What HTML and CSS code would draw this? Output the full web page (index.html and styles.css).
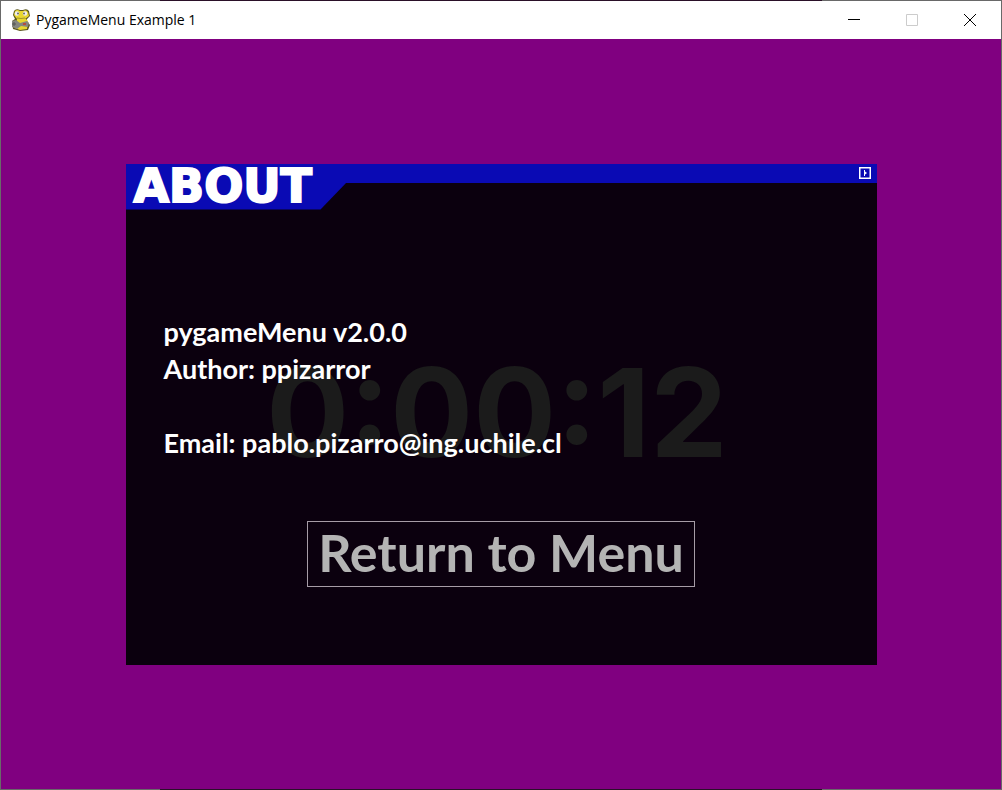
FILE: index.html
```html
<!DOCTYPE html>
<html lang="en">
<head>
<meta charset="utf-8">
<title>PygameMenu Example 1</title>
<link rel="stylesheet" href="styles.css">
</head>
<body>
<div class="window">
  <header class="titlebar">
    <svg class="app-icon" viewBox="0 0 20 22" aria-hidden="true">
      <path d="M3 2Q5-1 9 1H12Q16-1 18 2L19 7 16 10V12L19 16 17 21 9 22 2 20 1 12 4 10 2 6Z" fill="#5b571d"/>
      <path d="M4 2Q6 0 9 2H12Q15 0 17 3L18 7 14 10H6L3 6ZM6 10H15L17 12 16 20 9 21 4 19Z" fill="#e8d72f"/>
      <circle cx="6" cy="4.500" r="2.200" fill="#eee"/><circle cx="14" cy="4.500" r="2.200" fill="#eee"/>
      <circle cx="7" cy="4.500" r="1" fill="#666"/><circle cx="13" cy="4.500" r="1" fill="#666"/>
      <path d="M6 9Q10 10 14 9" stroke="#a1952a" fill="none"/>
      <path d="M1 12 5 11 9 14 16 12 18 14 17 18 10 17 6 20 1 18Z" fill="#85867e"/>
      <path d="M3 13V17M1 15H5" stroke="#555"/><path d="M12 14H15V16H12Z" fill="#b44c40"/>
    </svg>
    <h1 class="window-title">PygameMenu Example 1</h1>
    <div class="window-controls">
      <button class="control" aria-label="Minimize"><svg viewBox="0 0 12 12"><path d="M0 5.500H12"/></svg></button>
      <button class="control" aria-label="Maximize" disabled><svg viewBox="0 0 12 12"><path d="M.5.5H11.500V11.500H.5Z"/></svg></button>
      <button class="control" aria-label="Close"><svg viewBox="0 0 12 12"><path d="M0 0 12 12M12 0 0 12"/></svg></button>
    </div>
  </header>
  <main class="stage">
    <section class="menu">
      <div class="clock">0:00:12</div>
      <header class="menu-bar">
        <h2 class="menu-title">ABOUT</h2>
        <button class="exit" aria-label="Back"><svg viewBox="0 0 12 12"><path d="M.75.75H11.250V11.250H.75Z" stroke-width="1.500"/><path d="M5.500 3V9" stroke-width="1"/><path d="M5.500 4 8 6 5.500 8Z" fill="#fff" stroke="none"/></svg></button>
      </header>
      <div class="menu-body">
        <p class="line">pygameMenu v2.0.0</p>
        <p class="line">Author: ppizarror</p>
        <p class="line">&nbsp;</p>
        <p class="line">Email: pablo.pizarro@ing.uchile.cl</p>
        <button class="return">Return to Menu</button>
      </div>
    </section>
  </main>
</div>
</body>
</html>
```
FILE: styles.css
```css
* { box-sizing: border-box; }
body { margin: 0; }
h1, h2, p { margin: 0; }
button { margin: 0; padding: 0; border: 0; background: none; font: inherit; color: inherit; }

.window {
  display: flex;
  flex-direction: column;
  min-height: 100vh;
  border: 1px solid #696969;
  border-image: linear-gradient(90deg, #696969 16%, #2a1028 16%, #2a1028 82%, #696969 82%) 1;
  background: #800080;
}
.titlebar {
  display: flex;
  align-items: center;
  height: 38px;
  padding: 0 2px 0 10px;
  background: #fff;
  color: #000;
}
.app-icon { width: 20px; height: 22px; }
.window-title {
  margin-left: 5px;
  font: 400 14px/20px "Open Sans", sans-serif;
}
.window-controls { display: flex; height: 100%; margin-left: auto; }
.control { display: grid; place-items: center; width: 58px; }
.control svg { width: 12px; height: 12px; overflow: visible; fill: none; stroke: #000; stroke-width: 1; }
.control:disabled svg { stroke: #ccc; }

.stage { flex: 1; display: grid; place-items: center; }
.menu {
  position: relative;
  width: calc(75% + 1px);
  min-height: 501px;
  background: #0b000e;
  color: #fff;
}
.clock {
  position: absolute;
  inset: 0;
  display: grid;
  place-items: center;
  padding: 0 8px 4px 0;
  color: #1b1b1b;
  font: 700 123px/1 Inter, sans-serif;
}
.menu-bar {
  position: relative;
  display: flex;
  justify-content: space-between;
  align-items: flex-start;
  background: linear-gradient(#0a0ab4, #0a0ab4) top / 100% 19px no-repeat;
}
.menu-title {
  width: 222px;
  height: 46px;
  padding-left: 8px;
  background: #0a0ab4;
  clip-path: polygon(0 0, 100% 0, 100% 18px, 195px 100%, 0 100%);
  font: 700 46px/44px "DejaVu Sans", sans-serif;
  -webkit-text-stroke: 2px #fff;
}
.exit { margin: 3px 6px 0 0; }
.exit svg { display: block; width: 12px; height: 12px; fill: none; stroke: #fff; }
.menu-body {
  position: relative;
  display: flex;
  flex-direction: column;
  padding: 103px 38px 0;
}
.line { font: 700 27px/37px Lato, sans-serif; }
.return {
  align-self: center;
  margin-top: 60px;
  padding: 0 10px 4px;
  border: 1px solid #a69ca6;
  color: #b4b4b4;
  font: 700 52px/60px Lato, sans-serif;
}
```
